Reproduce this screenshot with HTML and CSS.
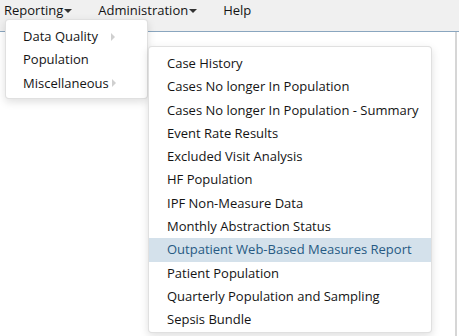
FILE: index.html
```html
<!DOCTYPE html>
<html lang="en">
<head>
    <meta charset="UTF-8">
    <title>Reports</title>
    <link rel="stylesheet" href="styles.css">
</head>
<body>
    <div class="navbar">
        <a class="nav-link">Reporting<span class="caret"></span></a>
        <a class="nav-link">Administration<span class="caret"></span></a>
        <a class="nav-link">Help</a>
    </div>

    <div class="page">
        <div class="page-edge"></div>
    </div>

    <ul class="dropdown first">
        <li class="has-sub">Data Quality<span class="arrow wide"></span></li>
        <li>Population</li>
        <li class="has-sub">Miscellaneous<span class="arrow"></span></li>
    </ul>

    <ul class="dropdown second">
        <li>Case History</li>
        <li>Cases No longer In Population</li>
        <li>Cases No longer In Population - Summary</li>
        <li>Event Rate Results</li>
        <li>Excluded Visit Analysis</li>
        <li>HF Population</li>
        <li>IPF Non-Measure Data</li>
        <li>Monthly Abstraction Status</li>
        <li class="active">Outpatient Web-Based Measures Report</li>
        <li>Patient Population</li>
        <li>Quarterly Population and Sampling</li>
        <li>Sepsis Bundle</li>
    </ul>
</body>
</html>
```

FILE: styles.css
```css
body {
    font-family: "Open Sans", Arial, sans-serif;
    font-size: 13px;
    color: #141414;
    margin: 0;
    padding: 0;
    background: #fff;
    width: 459px;
    height: 336px;
    overflow: hidden;
    position: relative;
}
.navbar {
    display: flex;
    gap: 26px;
    height: 32px;
    padding-left: 4px;
    background: #f0f0f0;
    border-bottom: 1px solid #8aa6bf;
    box-sizing: border-box;
}
.nav-link {
    line-height: 20px;
    color: #141414;
    display: flex;
    align-items: center;
    height: 20px;
}
.caret {
    display: inline-block;
    width: 0;
    height: 0;
    margin-left: 1px;
    margin-top: 2px;
    border-top: 4px solid #333;
    border-left: 4px solid transparent;
    border-right: 4px solid transparent;
}
.page {
    height: 304px;
    display: flex;
    justify-content: flex-end;
}
.page-edge {
    width: 2px;
    margin-right: 2px;
    background: #d6d6d6;
}
.dropdown {
    position: absolute;
    list-style: none;
    margin: 0;
    padding: 5px 0 3px;
    background: #fff;
    border: 1px solid rgba(0, 0, 0, 0.12);
    border-radius: 4px;
    box-shadow: 0 3px 8px rgba(0, 0, 0, 0.13);
}
.dropdown li {
    line-height: 17.3px;
    padding: 3px 18px;
    white-space: nowrap;
}
.first {
    left: 5px;
    top: 19px;
    width: 143px;
    box-sizing: border-box;
}
.first li {
    padding-left: 17px;
}
.has-sub {
    display: flex;
    align-items: center;
}
.arrow {
    display: inline-block;
    width: 0;
    height: 0;
    margin-left: 3px;
    border-left: 4px solid #cfcfcf;
    border-top: 4px solid transparent;
    border-bottom: 4px solid transparent;
}
.arrow.wide {
    margin-left: 13px;
}
.second {
    left: 148px;
    top: 46px;
    width: 284px;
    height: 287px;
    box-sizing: border-box;
}
.second li.active {
    background: #d4e1eb;
    color: #275a83;
}
```
